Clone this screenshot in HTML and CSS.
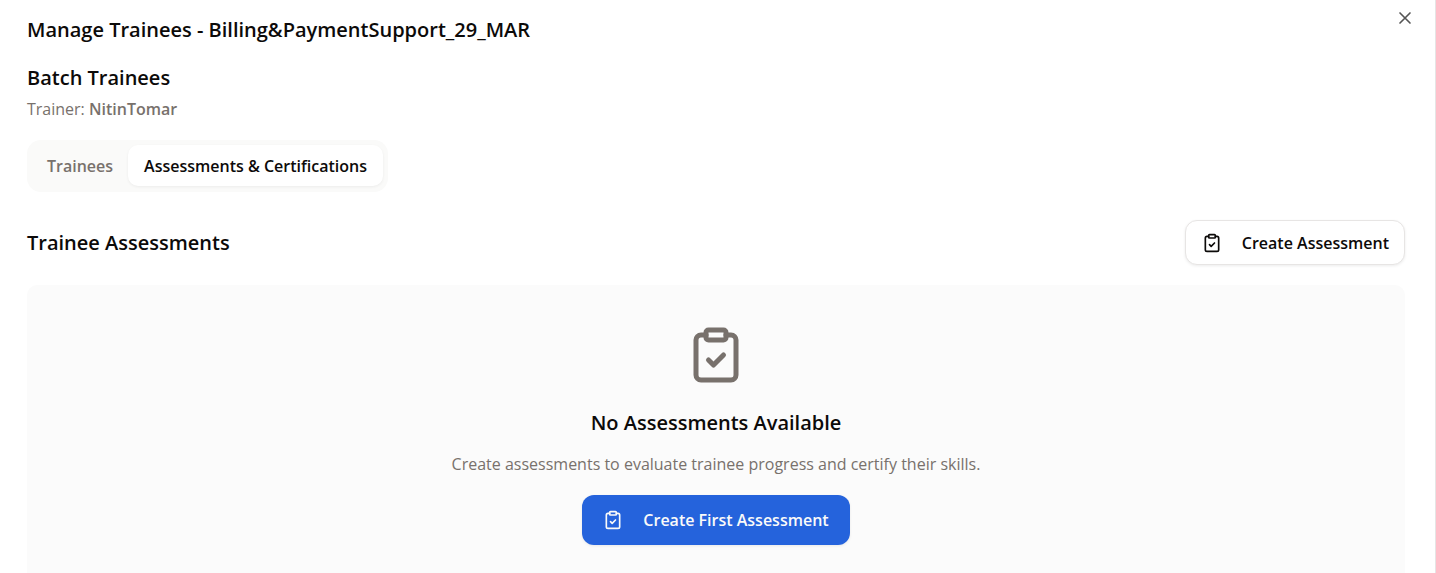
FILE: index.html
```html
<!DOCTYPE html>
<html lang="en">
<head>
<meta charset="utf-8">
<meta name="viewport" content="width=device-width, initial-scale=1">
<title>Manage Trainees</title>
<link rel="stylesheet" href="styles.css">
</head>
<body>
<svg class="sprite" aria-hidden="true">
  <symbol id="clipboard-check" viewBox="0 0 24 24">
    <rect width="8" height="4" x="8" y="2" rx="1" ry="1"/>
    <path d="M16 4h2a2 2 0 0 1 2 2v14a2 2 0 0 1-2 2H6a2 2 0 0 1-2-2V6a2 2 0 0 1 2-2h2"/>
    <path d="m9 14 2 2 4-4"/>
  </symbol>
</svg>
<main class="dialog">
  <button class="close" type="button" aria-label="Close">
    <svg class="icon close-icon" viewBox="0 0 24 24" aria-hidden="true"><path d="M18 6 6 18M6 6l12 12"/></svg>
  </button>
  <h1 class="heading">Manage Trainees - Billing&amp;PaymentSupport_29_MAR</h1>
  <header class="batch">
    <h2 class="heading">Batch Trainees</h2>
    <p class="trainer">Trainer: <strong class="trainer-name">NitinTomar</strong></p>
  </header>
  <div class="tabs" role="tablist">
    <button class="tab" type="button" role="tab" aria-selected="false">Trainees</button>
    <button class="tab tab-active" type="button" role="tab" aria-selected="true">Assessments &amp; Certifications</button>
  </div>
  <section class="assessments">
    <div class="toolbar">
      <h2 class="heading">Trainee Assessments</h2>
      <button class="button button-outline" type="button">
        <svg class="icon button-icon" aria-hidden="true"><use href="#clipboard-check"/></svg>
        Create Assessment
      </button>
    </div>
    <div class="empty">
      <svg class="icon empty-icon" aria-hidden="true"><use href="#clipboard-check"/></svg>
      <h3 class="heading empty-title">No Assessments Available</h3>
      <p class="empty-text">Create assessments to evaluate trainee progress and certify their skills.</p>
      <button class="button button-primary" type="button">
        <svg class="icon button-icon" aria-hidden="true"><use href="#clipboard-check"/></svg>
        Create First Assessment
      </button>
    </div>
  </section>
</main>
</body>
</html>
```
FILE: styles.css
```css
* {
  box-sizing: border-box;
}

html,
body {
  height: 100%;
}

body {
  margin: 0;
  overflow: hidden;
  background: #fff;
  color: #0c0a09;
  font-family: "Segoe UI", "Open Sans", "Noto Sans", sans-serif;
  font-size: 16px;
  line-height: 24px;
}

button {
  font: inherit;
  cursor: pointer;
}

h1,
h2,
h3,
p {
  margin: 0;
}

.sprite {
  position: absolute;
  width: 0;
  height: 0;
}

.icon {
  flex: none;
  fill: none;
  stroke: currentColor;
  stroke-width: 2;
  stroke-linecap: round;
  stroke-linejoin: round;
}

.dialog {
  position: relative;
  display: flex;
  flex-direction: column;
  min-height: 100%;
  padding: 16px 30px 0 27px;
  border-right: 1px solid #e5e5e5;
}

.close {
  position: absolute;
  top: 8px;
  right: 20px;
  display: flex;
  padding: 0;
  border: 0;
  background: none;
  color: #555;
}

.close-icon {
  width: 20px;
  height: 20px;
}

.heading {
  font-size: 20px;
  font-weight: 600;
  line-height: 28px;
}

.batch {
  margin-top: 20px;
}

.trainer {
  margin-top: 5px;
  color: #78716c;
}

.trainer-name {
  font-weight: 600;
}

.tabs {
  display: flex;
  align-self: flex-start;
  margin-top: 19px;
  padding: 5px 5px 6px;
  border-radius: 14px;
  background: #fafaf9;
}

.tab {
  padding: 9px 15px 8px;
  border: 0;
  border-radius: 10px;
  background: none;
  color: #78716c;
  font-weight: 600;
}

.tab-active {
  padding-inline: 16px;
  background: #fff;
  color: #0c0a09;
  box-shadow: 0 1px 3px rgb(0 0 0 / 6%);
}

.assessments {
  display: flex;
  flex: 1;
  flex-direction: column;
  gap: 20px;
  margin-top: 28px;
}

.toolbar {
  display: flex;
  align-items: center;
  justify-content: space-between;
}

.button {
  display: flex;
  align-items: center;
  gap: 20px;
  border: 0;
  border-radius: 12px;
  font-weight: 600;
  box-shadow: 0 1px 3px rgb(0 0 0 / 8%);
}

.button-icon {
  width: 20px;
  height: 20px;
}

.button-outline {
  padding: 10px 15px 9px 16px;
  border: 1px solid #e7e5e4;
  background: #fff;
  color: #0c0a09;
}

.button-primary {
  margin-top: 19px;
  padding: 13px 21px;
  background: #2563dc;
  color: #fafaf9;
}

.empty {
  display: flex;
  flex: 1;
  flex-direction: column;
  align-items: center;
  padding: 40px 20px 28px;
  border-radius: 10px 10px 0 0;
  background: #fbfbfb;
}

.empty-icon {
  width: 60px;
  height: 60px;
  color: #78716c;
}

.empty-title {
  margin-top: 24px;
}

.empty-text {
  margin-top: 15px;
  color: #78716c;
}
```
